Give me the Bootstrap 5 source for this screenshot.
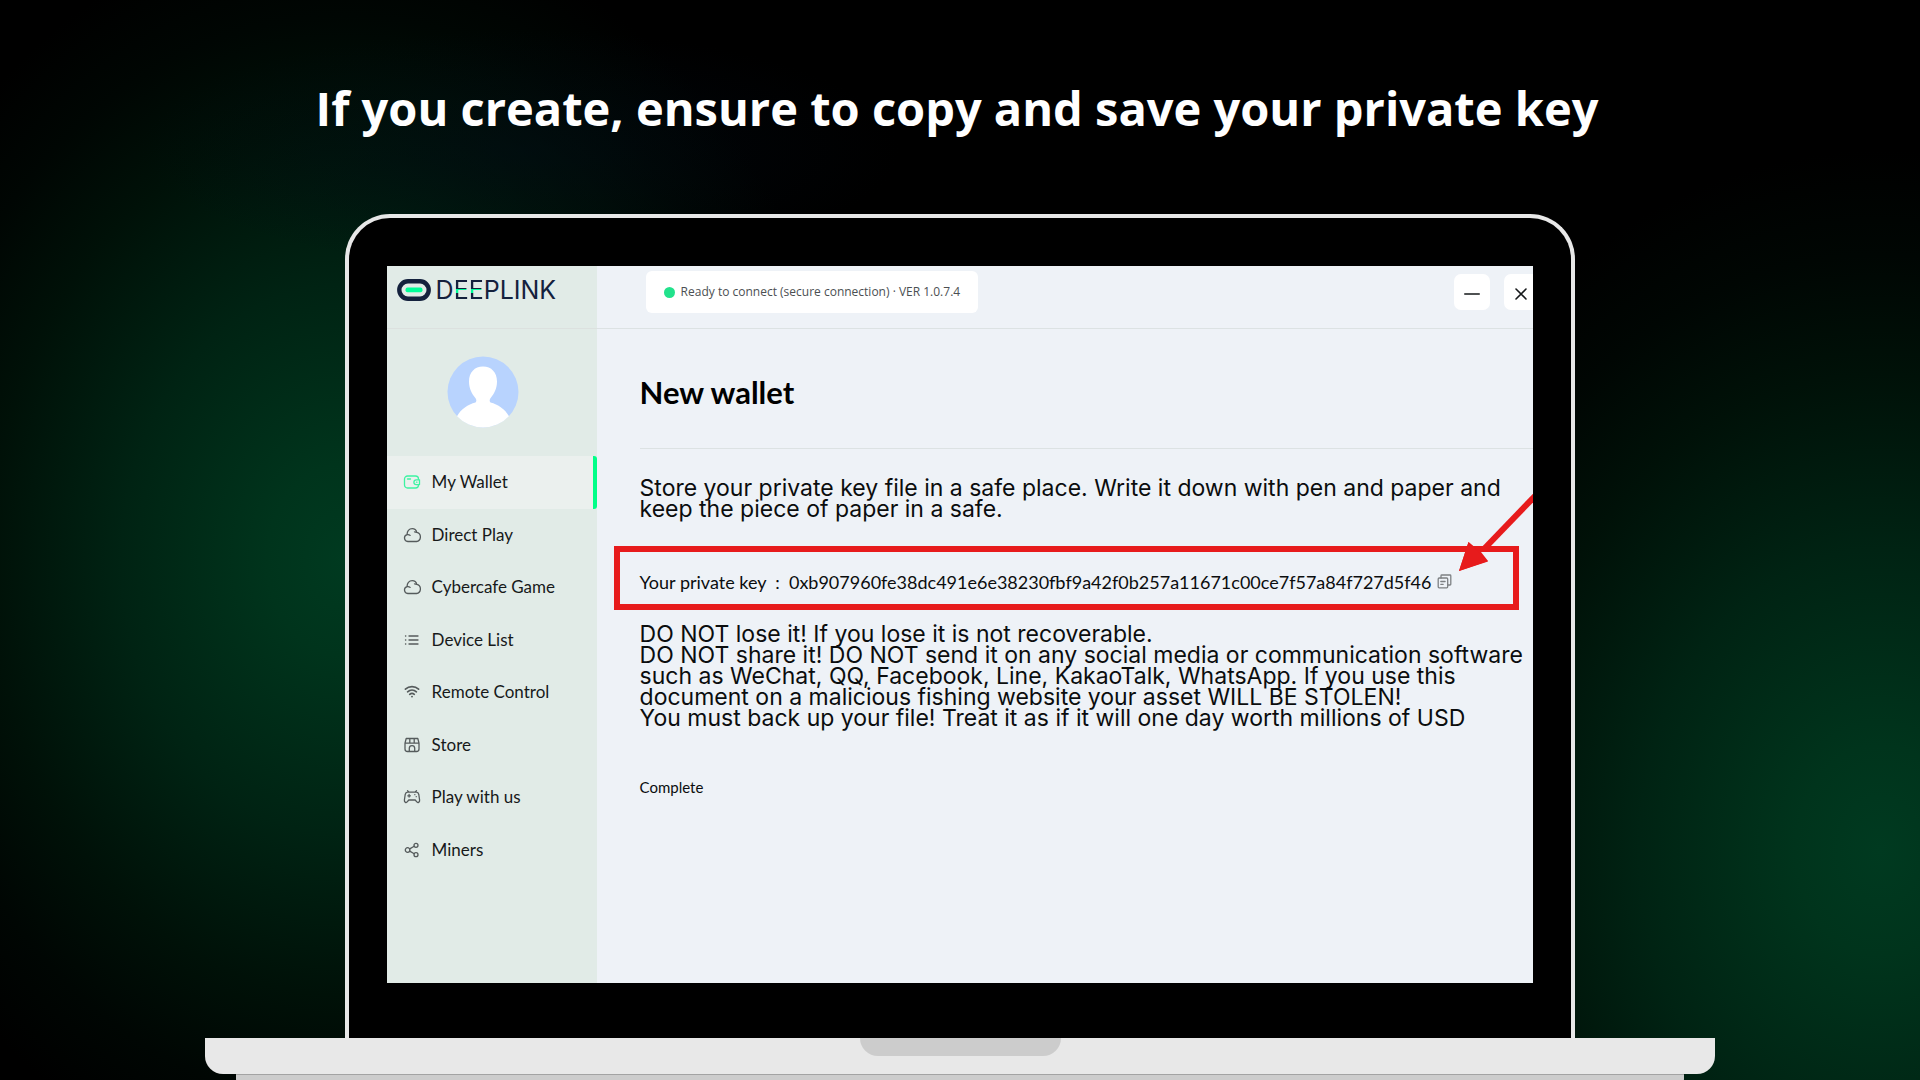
<!DOCTYPE html>
<html lang="en">
<head>
<meta charset="utf-8">
<meta name="viewport" content="width=device-width, initial-scale=1">
<title>DeepLink – New wallet</title>
<link href="https://cdn.jsdelivr.net/npm/bootstrap@5.3.0/dist/css/bootstrap.min.css" rel="stylesheet">
<style>
  body {
    background:
      radial-gradient(ellipse 380px 120px at 520px 150px, rgba(2,12,22,.5), transparent 100%),
      radial-gradient(ellipse 520px 640px at 345px 560px, #003a20 0%, #00341c 15%, #002313 43%, #001108 68%, #000603 85%, transparent 100%),
      radial-gradient(ellipse 560px 700px at 1880px 850px, #003a20 0%, #00341c 15%, #002313 43%, #001108 68%, #000603 85%, transparent 100%),
      #000;
    font-family: Lato, "Open Sans", sans-serif;
    color: #0b0d0e;
  }
  .headline {
    font: 700 47px/64px "Open Sans", sans-serif;
    padding: 76px 0 74px;
    margin-left: -6px;
  }
  .lid {
    margin: 0 calc(18% - 1px);
    padding: 48px 38px 55px;
    background: #000;
    border: 4px solid #e8e8e8;
    border-bottom: 0;
    border-radius: 45px 45px 0 0;
  }
  .screen { min-height: 717px; background: #eef2f7; }
  .base { margin: 0 10.7%; height: 36px; background: #e8e8e8; border-radius: 0 0 18px 18px; }
  .notch { width: 201px; height: 18px; background: #ccc; border-radius: 0 0 18px 18px; }
  .foot { margin: 0 12.3%; height: 24px; background: #ccc; border-top: 1px solid #a3a3a3; border-radius: 0 0 20px 20px; }

  .side { width: 210px; background: #e1ebe7; }
  .bar { height: 63px; border-bottom: 1px solid #dce2e3; padding-bottom: 14px; }
  .side .bar { border-color: #dce1df; padding: 0 10px 14px; gap: 5px; }
  .wordmark { font: 400 25px/26px Inter, sans-serif; color: #14213d; }
  .wordmark span {
    background: linear-gradient(#14213d 0 14px, #0f9 14px 18px, #14213d 18px);
    -webkit-background-clip: text; background-clip: text; color: transparent;
  }
  .avatar { margin: 27px 0 28px 60px; }
  .menu { min-height: 420px; }
  .menu a { color: #17191a; font-size: 17px; line-height: 24px; padding-left: 16px; gap: 11px; text-decoration: none; }
  .menu svg, .copy svg { fill: none; stroke: #555b5c; stroke-width: 1.3; stroke-linecap: round; stroke-linejoin: round; }
  .menu a.active { background: #ebf0ee; border-right: 4px solid #0f8; border-radius: 0 3px 3px 0; }
  .menu a.active svg { stroke: #3cf3a2; }

  .status { margin-left: 49px; height: 42px; padding: 0 18px; gap: 6px; background: #fff; border-radius: 6px; font: 400 12px/18px "Open Sans", sans-serif; color: #4b4f52; }
  .dot { width: 11px; height: 11px; background: #22e28c; }
  .winbtns { gap: 14px; }
  .winbtn { width: 36px; height: 36px; border: 0; border-radius: 7px; background: #fff; padding: 0; }
  .winbtn svg { stroke: #15181a; stroke-width: 1.6; stroke-linecap: round; }
  .winbtn.cut { width: 29px; border-radius: 7px 0 0 7px; text-align: left; padding-left: 10px; }

  .sheet { padding-left: 43px; }
  .sheet h1 { font-size: 31px; font-weight: 700; line-height: 40px; margin: 0; padding: 43px 0 36px; border-bottom: 1px solid #dce2e3; color: #000; }
  .warn { font: 400 23px/21px Inter, sans-serif; margin: 0; white-space: nowrap; }
  .warn.intro { padding: 29px 0 26px; }
  .warn.rules { padding: 14px 0 46px; }
  .keybox { margin: 0 14px 0 -26px; height: 64px; border: 6px solid #e71b1c; padding: 8px 0 0 20px; font-size: 18px; white-space: nowrap; }
  .copy { border: 0; background: none; padding: 0 0 4px; margin-left: 5px; line-height: 1; }
  .copy svg { stroke: #7d8083; }
  .done { border: 0; background: none; padding: 0; font-size: 15px; line-height: 20px; color: #0b0d0e; }
  .arrow { right: 0; top: 228px; }
</style>
</head>
<body class="vh-100 overflow-hidden">
<h2 class="headline text-white text-center mb-0">If you create, ensure to copy and save your private key</h2>

<div class="lid">
  <div class="screen d-flex position-relative overflow-hidden">
    <aside class="side flex-shrink-0">
      <div class="bar d-flex align-items-center">
        <svg width="34" height="22" viewBox="0 0 34 22" aria-hidden="true">
          <rect x="2.300" y="2.300" width="29.400" height="17.400" rx="8.700" fill="none" stroke="#14213d" stroke-width="4.400"/>
          <rect x="8.500" y="8.600" width="17" height="4.600" rx="2" fill="#0f9"/>
        </svg>
        <div class="wordmark">D<span>EE</span>PLINK</div>
      </div>
      <svg class="avatar d-block" width="72" height="72" viewBox="0 0 72 72" role="img" aria-label="Profile picture">
        <circle cx="36" cy="36" r="35.500" fill="#b8d3fe"/>
        <path fill="#fff" d="M36 10.500c-8.500 0-14 6-14 15 0 7 3 12.500 6 16 1.600 2 1.800 3.800.5 5C21 48.500 14 53 10 60.200a35.500 35.500 0 0 0 52 0C58 53 51 48.500 43.500 46.500c-1.300-1.200-1.100-3 .5-5 3-3.500 6-9 6-16 0-9-5.500-15-14-15z"/>
      </svg>
      <nav class="menu d-flex flex-column">
        <a href="#" class="active flex-fill d-flex align-items-center"><svg width="18" height="16" viewBox="0 0 18 16"><rect x="1.500" y="2" width="14" height="12" rx="3"/><path d="M4.500 5h3"/><path d="M16.500 5.800h-3.200a2.400 2.400 0 0 0 0 4.800h3.200z" fill="#ebf0ee"/><path d="M13.500 8.200h.4"/></svg>My Wallet</a>
        <a href="#" class="flex-fill d-flex align-items-center"><svg width="18" height="16" viewBox="0 0 18 16"><path d="M4.800 14.500a3.500 3.500 0 0 1-.6-6.900C3.800 4.200 6.200 1.600 9.200 1.600c2.300 0 4 1.400 4.600 3.700a4.700 4.700 0 0 1-.3 9.200zM4.200 7.600c1.200-.2 2.200.1 2.900.8M11.500 4.800c1 0 1.700.2 2.300.5"/></svg>Direct Play</a>
        <a href="#" class="flex-fill d-flex align-items-center"><svg width="18" height="16" viewBox="0 0 18 16"><path d="M4.800 14.500a3.500 3.500 0 0 1-.6-6.900C3.800 4.200 6.200 1.600 9.200 1.600c2.300 0 4 1.400 4.600 3.700a4.700 4.700 0 0 1-.3 9.200zM4.200 7.600c1.200-.2 2.200.1 2.900.8M11.500 4.800c1 0 1.700.2 2.300.5"/></svg>Cybercafe Game</a>
        <a href="#" class="flex-fill d-flex align-items-center"><svg width="18" height="16" viewBox="0 0 18 16"><path d="M2.500 4h.3M6 4h9M2.500 8h.3M6 8h9M2.500 12h.3M6 12h9"/></svg>Device List</a>
        <a href="#" class="flex-fill d-flex align-items-center"><svg width="18" height="16" viewBox="0 0 18 16"><path d="M2.400 5.200a10 10 0 0 1 13.200 0M4.600 7.800a6.800 6.800 0 0 1 8.800 0M6.700 10.300a3.700 3.700 0 0 1 4.600 0M8.900 12.600h.2" stroke-width="1.700"/></svg>Remote Control</a>
        <a href="#" class="flex-fill d-flex align-items-center"><svg width="18" height="16" viewBox="0 0 18 16"><path d="M3.200 1.500h11.600l1.200 4.700H2zM2 6.200V12a2.500 2.500 0 0 0 2.500 2.500h9A2.500 2.500 0 0 0 16 12V6.200M6.800 1.500v4.700M11.200 1.500v4.700M6.300 14.500v-3.200a2.700 2.700 0 0 1 5.400 0v3.200"/></svg>Store</a>
        <a href="#" class="flex-fill d-flex align-items-center"><svg width="18" height="16" viewBox="0 0 18 16"><path d="M4.500 3.200h9c1.300 0 2 1 2.300 2.300l.8 5.500c.3 2.300-1.800 3.300-3 1.700L12.200 11H5.800l-1.400 1.700c-1.200 1.600-3.300.6-3-1.700l.8-5.500C2.500 4.200 3.200 3.200 4.500 3.200zM4.500 1.600l1.600 1.500M13.500 1.600l-1.600 1.500M4.800 6.800h2.600M6.100 5.500v2.600M11.800 5.700h.1M13.200 7.700h.1"/></svg>Play with us</a>
        <a href="#" class="flex-fill d-flex align-items-center"><svg width="18" height="16" viewBox="0 0 18 16"><circle cx="4.600" cy="8" r="2.300"/><circle cx="13" cy="3.300" r="2"/><circle cx="13" cy="12.700" r="2"/><path d="M6.700 6.900l4.500-2.600M6.700 9.100l4.500 2.600"/></svg>Miners</a>
      </nav>
    </aside>

    <main class="flex-grow-1">
      <div class="bar d-flex align-items-center justify-content-between">
        <div class="status d-flex align-items-center mt-1"><span class="dot rounded-circle"></span>Ready to connect (secure connection) · VER 1.0.7.4</div>
        <div class="winbtns d-flex mt-1">
          <button type="button" class="winbtn" aria-label="Minimize"><svg width="16" height="16" viewBox="0 0 16 16"><path d="M.8 8h14.400"/></svg></button>
          <button type="button" class="winbtn cut" aria-label="Close"><svg width="14" height="14" viewBox="0 0 14 14"><path d="M2 2l10 10M12 2L2 12"/></svg></button>
        </div>
      </div>
      <div class="sheet">
        <h1>New wallet</h1>
        <p class="warn intro">Store your private key file in a safe place. Write it down with pen and paper and<br>keep the piece of paper in a safe.</p>
        <div class="keybox d-flex align-items-center">
          <span>Your private key&nbsp; :&nbsp; 0xb907960fe38dc491e6e38230fbf9a42f0b257a11671c00ce7f57a84f727d5f46</span>
          <button type="button" class="copy" aria-label="Copy private key"><svg width="15" height="15" viewBox="0 0 15 15"><rect x="1.200" y="4" width="9.500" height="9.800" rx="1"/><path d="M4 4V1.800a.8.800 0 0 1 .8-.8h8.200a.8.800 0 0 1 .8.800v8.400a.8.800 0 0 1-.8.800h-2.300M3.800 7.500h4.300M3.800 10.300h2.400"/></svg></button>
        </div>
        <p class="warn rules">DO NOT lose it! If you lose it is not recoverable.<br>DO NOT share it! DO NOT send it on any social media or communication software<br>such as WeChat, QQ, Facebook, Line, KakaoTalk, WhatsApp. If you use this<br>document on a malicious fishing website your asset WILL BE STOLEN!<br>You must back up your file! Treat it as if it will one day worth millions of USD</p>
        <button type="button" class="done">Complete</button>
      </div>
    </main>

    <svg class="arrow position-absolute" width="74" height="78" viewBox="0 0 74 78" aria-hidden="true">
      <path d="M76 2L24 56" stroke="#e71b1c" stroke-width="6" fill="none"/>
      <path d="M0 77L9.500 48 18 55l4 3 7 9z" fill="#e71b1c"/>
      <path d="M0 77L9.500 48 29 67.500z" fill="#e71b1c"/>
    </svg>
  </div>
</div>
<div class="base"><div class="notch mx-auto"></div></div>
<div class="foot"></div>
<script src="https://cdn.jsdelivr.net/npm/bootstrap@5.3.0/dist/js/bootstrap.bundle.min.js"></script>
</body>
</html>
